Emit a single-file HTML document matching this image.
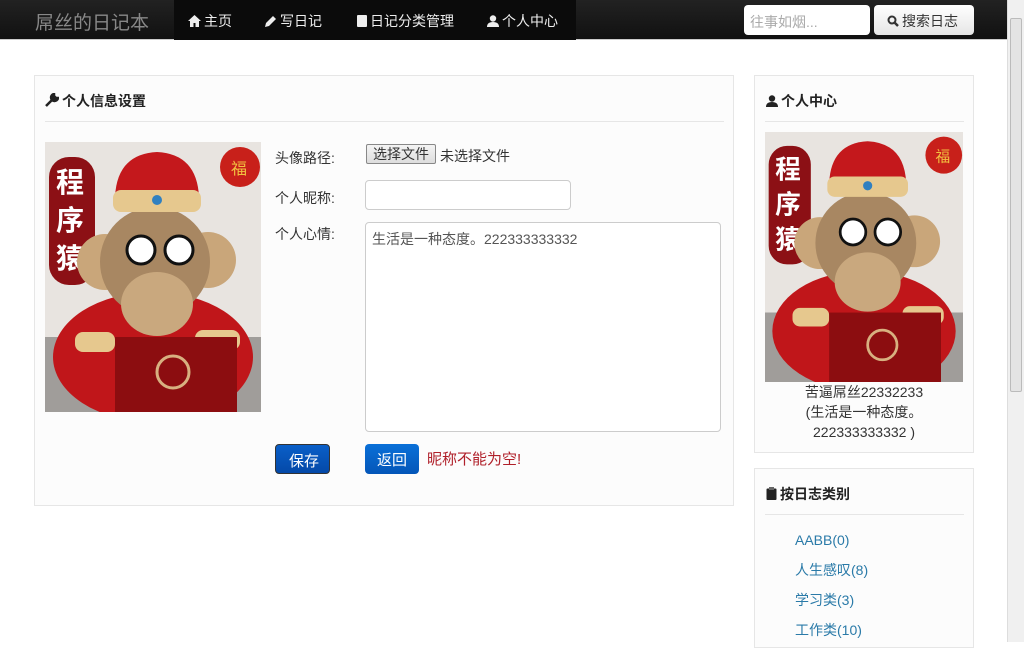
<!DOCTYPE html>
<html><head><meta charset="utf-8"><style>
*{box-sizing:border-box;margin:0;padding:0}
body{width:1024px;height:642px;overflow:hidden;background:#fff;font-family:"Liberation Sans","Noto Sans CJK SC",sans-serif;font-size:14px;color:#333;position:relative}
.nav{position:absolute;left:0;top:0;width:1007px;height:40px;background:linear-gradient(#222,#111);border-bottom:1px solid #ccc}
.brand{position:absolute;left:35px;top:8px;font-size:19px;color:#888}
.menu{position:absolute;left:174px;top:0;height:40px;width:402px;background:#0b0b0b}
.menu span{position:absolute;top:11px;color:#eee;font-size:14px}
.srch{position:absolute;left:744px;top:5px;width:126px;height:30px;background:#fff;border-radius:4px;color:#aaa;padding:7px 6px;font-size:14px}
.sbtn{position:absolute;left:874px;top:5px;width:100px;height:30px;background:linear-gradient(#fff,#e6e6e6);border-radius:4px;padding:6px 0 0 13px;font-size:14px;color:#333}
.panel{position:absolute;background:#fcfcfc;border:1px solid #e6e6e6}
.ttl{position:absolute;font-weight:bold;font-size:14px;color:#222}
.hr{position:absolute;height:1px;background:#e6e6e6}
.lbl{position:absolute;font-size:14px;color:#333}
.scroll{position:absolute;left:1007px;top:0;width:17px;height:642px;background:#f0f0f0;border-left:1px solid #ddd}
.thumb{position:absolute;left:1010px;top:18px;width:12px;height:374px;background:#e4e4e4;border:1px solid #bbb;border-radius:2px}
a{color:#2a7aa8;text-decoration:none}
.pi{display:inline-block;vertical-align:-1px;margin-right:3px}
</style></head><body>
<div class="nav">
<div class="brand">屌丝的日记本</div>
<div class="menu">
<span style="left:14px"><svg class="pi" width="13" height="12" viewBox="0 0 13 12"><path d="M6.5 0L0 6h2v6h3.5V8h2v4H11V6h2z" fill="#eee"/></svg>主页</span>
<span style="left:91px"><svg class="pi" width="12" height="12" viewBox="0 0 12 12"><path d="M0 12l1-4 7-7 3 3-7 7z" fill="#eee"/></svg>写日记</span>
<span style="left:182px"><svg class="pi" width="11" height="12" viewBox="0 0 11 12"><rect x="1" y="0" width="10" height="12" rx="1" fill="#eee"/></svg>日记分类管理</span>
<span style="left:313px"><svg class="pi" width="12" height="12" viewBox="0 0 12 12"><circle cx="6" cy="3.5" r="3.2" fill="#eee"/><path d="M0 12Q0 7 6 7Q12 7 12 12z" fill="#eee"/></svg>个人中心</span>
</div>
<div class="srch">往事如烟...</div>
<div class="sbtn"><svg class="pi" width="12" height="12" viewBox="0 0 12 12"><circle cx="5" cy="5" r="3.5" fill="none" stroke="#333" stroke-width="2"/><path d="M7.5 7.5L11 11" stroke="#333" stroke-width="2.5"/></svg>搜索日志</div>
</div>

<div class="panel" style="left:34px;top:75px;width:700px;height:431px"></div>
<div class="ttl" style="left:45px;top:91px"><svg class="pi" width="14" height="14" viewBox="0 0 14 14"><path d="M1 13L8 6M9 1a3.5 3.5 0 1 0 4 4l-2 0-2-2z" stroke="#222" stroke-width="2.5" fill="#222"/></svg>个人信息设置</div>
<div class="hr" style="left:45px;top:121px;width:679px"></div>

<svg style="position:absolute;left:45px;top:142px" width="216" height="270" viewBox="0 0 216 270">
<rect width="216" height="270" fill="#e8e4e0"/>
<polygon points="0,195 216,195 216,270 0,270" fill="#a09d9a"/>
<circle cx="195" cy="25" r="20" fill="#c8201a"/><text x="186" y="32" font-size="16" fill="#f2c040">福</text>
<rect x="4" y="15" width="46" height="128" rx="20" fill="#8c1015"/>
<text x="11" y="50" font-size="28" fill="#fff" font-weight="bold">程</text>
<text x="11" y="88" font-size="28" fill="#fff" font-weight="bold">序</text>
<text x="11" y="126" font-size="28" fill="#fff" font-weight="bold">猿</text>
<ellipse cx="108" cy="215" rx="100" ry="65" fill="#c0161a"/>
<circle cx="60" cy="120" r="28" fill="#c9a67a"/><circle cx="163" cy="118" r="28" fill="#c9a67a"/>
<ellipse cx="110" cy="120" rx="55" ry="55" fill="#a88762"/>
<ellipse cx="112" cy="162" rx="36" ry="32" fill="#c9a87e"/>
<path d="M70 55 Q72 12 112 10 Q152 12 154 55 Z" fill="#c4181c"/>
<rect x="68" y="48" width="88" height="22" rx="8" fill="#e6c88e"/>
<circle cx="112" cy="58" r="5" fill="#3080c0"/>
<circle cx="96" cy="108" r="14" fill="#fff" stroke="#111" stroke-width="3"/>
<circle cx="134" cy="108" r="14" fill="#fff" stroke="#111" stroke-width="3"/>
<rect x="30" y="190" width="40" height="20" rx="8" fill="#e6c88e"/>
<rect x="150" y="188" width="45" height="20" rx="8" fill="#e6c88e"/>
<rect x="70" y="195" width="122" height="75" fill="#8c0d10"/>
<circle cx="128" cy="230" r="16" fill="none" stroke="#d8b080" stroke-width="3"/>
</svg>

<div class="lbl" style="left:275px;top:148px">头像路径:</div>
<div style="position:absolute;left:366px;top:144px;width:70px;height:20px;border:1px solid #888;border-radius:2px;background:linear-gradient(#f4f4f4,#ddd);font-size:14px;padding:0 0 0 6px;line-height:18px">选择文件</div>
<div class="lbl" style="left:440px;top:146px">未选择文件</div>
<div class="lbl" style="left:275px;top:188px">个人昵称:</div>
<div style="position:absolute;left:365px;top:180px;width:206px;height:30px;border:1px solid #ccc;border-radius:4px;background:#fff"></div>
<div class="lbl" style="left:275px;top:224px">个人心情:</div>
<div style="position:absolute;left:365px;top:222px;width:356px;height:210px;border:1px solid #ccc;border-radius:4px;background:#fff;color:#555;padding:6px 6px;font-size:14px">生活是一种态度。222333333332</div>
<div style="position:absolute;left:275px;top:444px;width:55px;height:30px;border-radius:4px;background:linear-gradient(#0a5fc8,#0449a8);border:1px solid #333;color:#fff;font-size:15px;padding:5px 0 0 13px">保存</div>
<div style="position:absolute;left:365px;top:444px;width:54px;height:30px;border-radius:4px;background:linear-gradient(#0a70d8,#0456b8);color:#fff;font-size:15px;padding:5px 0 0 12px">返回</div>
<div class="lbl" style="left:427px;top:448px;color:#b0202a;font-size:15px">昵称不能为空!</div>

<div class="panel" style="left:754px;top:75px;width:220px;height:378px"></div>
<div class="ttl" style="left:766px;top:91px"><svg class="pi" width="12" height="12" viewBox="0 0 12 12"><circle cx="6" cy="3.5" r="3.2" fill="#222"/><path d="M0 12Q0 7 6 7Q12 7 12 12z" fill="#222"/></svg>个人中心</div>
<div class="hr" style="left:765px;top:121px;width:199px"></div>
<svg style="position:absolute;left:765px;top:132px" width="198" height="250" viewBox="0 0 216 270" preserveAspectRatio="none">
<rect width="216" height="270" fill="#e8e4e0"/>
<polygon points="0,195 216,195 216,270 0,270" fill="#a09d9a"/>
<circle cx="195" cy="25" r="20" fill="#c8201a"/><text x="186" y="32" font-size="16" fill="#f2c040">福</text>
<rect x="4" y="15" width="46" height="128" rx="20" fill="#8c1015"/>
<text x="11" y="50" font-size="28" fill="#fff" font-weight="bold">程</text>
<text x="11" y="88" font-size="28" fill="#fff" font-weight="bold">序</text>
<text x="11" y="126" font-size="28" fill="#fff" font-weight="bold">猿</text>
<ellipse cx="108" cy="215" rx="100" ry="65" fill="#c0161a"/>
<circle cx="60" cy="120" r="28" fill="#c9a67a"/><circle cx="163" cy="118" r="28" fill="#c9a67a"/>
<ellipse cx="110" cy="120" rx="55" ry="55" fill="#a88762"/>
<ellipse cx="112" cy="162" rx="36" ry="32" fill="#c9a87e"/>
<path d="M70 55 Q72 12 112 10 Q152 12 154 55 Z" fill="#c4181c"/>
<rect x="68" y="48" width="88" height="22" rx="8" fill="#e6c88e"/>
<circle cx="112" cy="58" r="5" fill="#3080c0"/>
<circle cx="96" cy="108" r="14" fill="#fff" stroke="#111" stroke-width="3"/>
<circle cx="134" cy="108" r="14" fill="#fff" stroke="#111" stroke-width="3"/>
<rect x="30" y="190" width="40" height="20" rx="8" fill="#e6c88e"/>
<rect x="150" y="188" width="45" height="20" rx="8" fill="#e6c88e"/>
<rect x="70" y="195" width="122" height="75" fill="#8c0d10"/>
<circle cx="128" cy="230" r="16" fill="none" stroke="#d8b080" stroke-width="3"/>
</svg>
<div style="position:absolute;left:754px;top:382px;width:220px;text-align:center;font-size:14px;line-height:20px;color:#333">苦逼屌丝22332233<br>(生活是一种态度。<br>222333333332 )</div>

<div class="panel" style="left:754px;top:468px;width:220px;height:180px"></div>
<div class="ttl" style="left:766px;top:484px"><svg class="pi" width="11" height="13" viewBox="0 0 11 13"><rect x="0.5" y="1.5" width="10" height="11.5" rx="1" fill="#222"/><rect x="3" y="0" width="5" height="3" fill="#666"/></svg>按日志类别</div>
<div class="hr" style="left:765px;top:514px;width:199px"></div>
<div style="position:absolute;left:795px;top:525px;font-size:14px;line-height:30px"><a>AABB(0)</a><br><a>人生感叹(8)</a><br><a>学习类(3)</a><br><a>工作类(10)</a></div>

<div class="scroll"></div><div class="thumb"></div>
</body></html>
